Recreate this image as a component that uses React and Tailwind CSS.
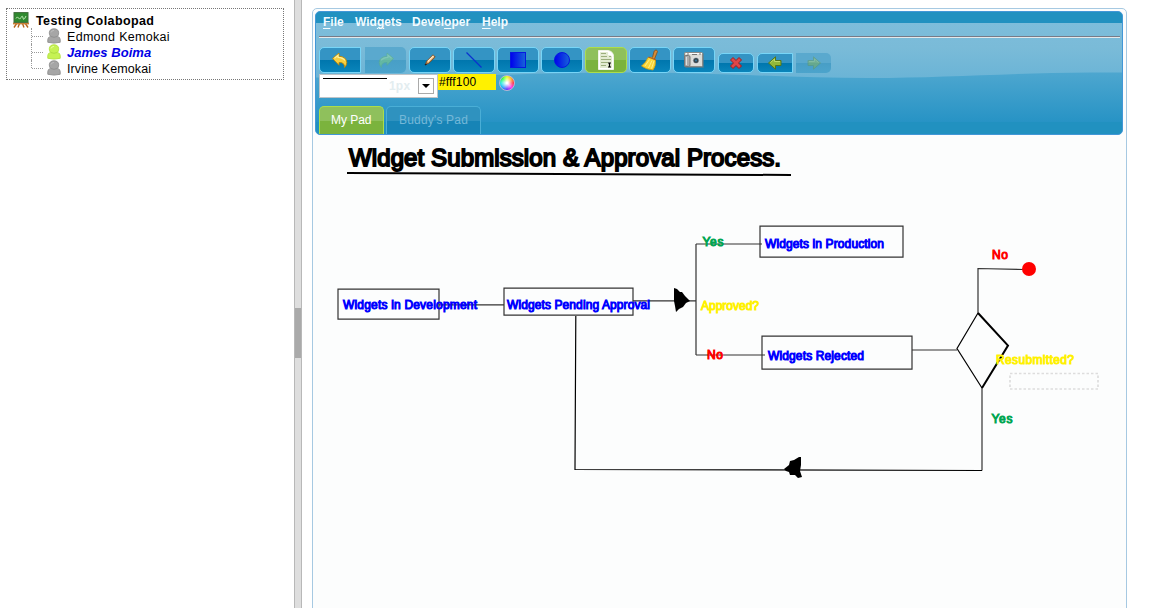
import React from "react";

const Person = ({ active }) => (
  <svg width="14" height="16" viewBox="0 0 14 16" className="shrink-0">
    <path
      d="M.8 14.300V11.500Q.8 9.200 3.500 8.400 2.300 7 2.300 4.800 2.600.800 7 .800t4.700 4Q11.700 7 10.500 8.400q2.700.8 2.700 3.100v2.800q-6.200 1.600-12.400 0z"
      fill={active ? "#c6f254" : "#a6a6a6"}
      stroke={active ? "#b2e040" : "#8e8e8e"}
      strokeWidth=".9"
    />
    <path d="M3.800 8.500q3.200 1.600 6.400 0" fill="none" stroke={active ? "#a5d63a" : "#8a8a8a"} strokeWidth=".8" />
    <path d="M4 4.500Q4.500 2.600 7 2.300" fill="none" stroke={active ? "#e4ff9c" : "#bdbdbd"} />
  </svg>
);

const Board = () => (
  <svg width="18" height="16" viewBox="0 0 18 16" className="shrink-0">
    <path d="M5 11 2 15.500M13 11l3 4.500M7.500 11.500l-1.500 4M10.500 11.500l1.500 4" stroke="#b5651d" strokeWidth="1.400" />
    <path d="M1 11.500h16" stroke="#c87f35" strokeWidth="1.800" />
    <rect x="2" y=".6" width="14" height="9.800" fill="#2f8a2f" stroke="#3f6b3a" />
    <path d="M4 6.500q1.500-3 2.500-.5T9 5.500t2 .500T14 4" fill="none" stroke="#bfe8b5" />
  </svg>
);

const Curve = ({ flip, a, b, c }) => (
  <svg width="18" height="18" viewBox="0 0 18 18" className={flip ? "-scale-x-100" : ""}>
    <path d="M1.500 7.500 8 2v3.200q7.500.6 7.800 6.300 0 2.800-2.300 5 .3-5.300-5.500-5v2.800z" fill={a} stroke={b} strokeWidth=".9" strokeLinejoin="round" />
    <path d="M3.500 7.300 7 4.300v2q5 .3 7 3.200" fill="none" stroke={c} strokeWidth="1.200" />
  </svg>
);

const Pencil = () => (
  <svg width="14" height="14" viewBox="0 0 14 14">
    <path d="m2.500 11.500 1.200-3.300L10 1.800 12.200 4 5.800 10.300z" fill="#e0a868" stroke="#7a4a20" strokeWidth=".9" />
    <path d="m4.800 8.500 5.700-5.700" stroke="#fff0d0" strokeWidth="1.200" />
    <path d="m2 12 1.500-1" stroke="#222" strokeWidth="1.500" />
  </svg>
);

const LineIcon = () => (
  <svg width="18" height="18" viewBox="0 0 18 18">
    <path d="m1.500 1.500 15 15" stroke="#0a32cf" strokeWidth="1.300" />
  </svg>
);

const Square = () => (
  <svg width="18" height="18" viewBox="0 0 18 18">
    <defs>
      <linearGradient id="sq"><stop stopColor="#0000ee" /><stop offset="1" stopColor="#1665d8" /></linearGradient>
    </defs>
    <rect x="1.500" y="1.500" width="15" height="15" fill="url(#sq)" stroke="#0618e0" />
  </svg>
);

const Circle = () => (
  <svg width="18" height="18" viewBox="0 0 18 18">
    <circle cx="9" cy="9" r="7.500" fill="url(#sq)" stroke="#0618e0" />
  </svg>
);

const Page = () => (
  <svg width="20" height="22" viewBox="0 0 20 22">
    <path d="M2.500 1.500H12q5.500 1 5.500 6v13h-15z" fill="#fff" stroke="#eef3e6" />
    <path d="M4 3h8q4 1.500 4 5v11H4z" fill="#e3ebd2" />
    <path d="M5 4.500h5M5 7.500h6M13 7.500h2M5 10.500h10M5 13.500h7M5 16.500h5" stroke="#94a874" strokeWidth=".9" />
    <path d="M11 2q5 1 6 6-2-2-5-2 1-2-1-4z" fill="#fff" />
    <path d="M12 14h3M13.500 14v4M12 18h3" stroke="#000" strokeWidth="1.200" />
  </svg>
);

const Broom = () => (
  <svg width="20" height="22" viewBox="0 0 20 22">
    <path d="m12.200 9.500 2-7.500q2.500-2.500 3.300.500L14.500 10z" fill="#d78b35" stroke="#81501c" strokeWidth=".8" />
    <path d="M8 8.500q4-1 7.500 2.500.5 6-2.500 10Q6 20.500 1.500 17 6 13.500 8 8.500z" fill="#f8d636" stroke="#c99a15" strokeWidth=".8" />
    <path d="M9.500 10.500 5 17M12 11.500 8.500 19M14 12l-2.500 7.500" stroke="#fff29a" strokeWidth=".8" />
    <path d="m8.500 8 7.500 3" stroke="#b45c20" strokeWidth="1.300" />
  </svg>
);

const Camera = () => (
  <svg width="22" height="18" viewBox="0 0 22 18">
    <rect x="2" y="2" width="19" height="15" rx="1" fill="#687982" opacity=".6" />
    <rect x="1.500" y="1.500" width="18" height="14" rx="1" fill="#dcdcd7" stroke="#8b8b87" />
    <rect x="1.500" y="4.500" width="5.500" height="11" rx="1.500" fill="#aaa" stroke="#777" />
    <path d="M3.500 6v8" stroke="#ddd" />
    <path d="M3 2.500h16" stroke="#fff" />
    <path d="M4 3h2M9 3.500h5M16 3h2" stroke="#777" />
    <circle cx="13" cy="9.500" r="3.800" fill="#b7bdc1" stroke="#e6e6e6" />
    <circle cx="13" cy="9.500" r="2.500" fill="#37464d" />
    <circle cx="13" cy="9.500" r="1" fill="#3c79a0" />
  </svg>
);

const Cross = () => (
  <svg width="14" height="14" viewBox="0 0 14 14">
    <path d="m1.500 4 2.500-2.500 3 3 3-3L12.500 4l-3 3 3 3-2.500 2.500-3-3-3 3L1.500 10l3-3z" fill="#df4646" stroke="#a51d1d" strokeLinejoin="round" />
  </svg>
);

const Arrow = ({ flip }) => (
  <svg width="16" height="14" viewBox="0 0 16 14" className={flip ? "-scale-x-100" : ""}>
    <path d="M1.500 7 8.500.8v3.700h5.500v5H8.500v3.700z" fill="#92b83a" stroke={flip ? "#66964a" : "#54761b"} strokeLinejoin="round" />
    <path d="M3.500 6.500 7.500 3v2.500h5.500" fill="none" stroke="#bcd968" />
  </svg>
);

const blue = "bg-linear-to-b from-[#3494c4] from-50% to-[#0a85bb] via-[#0076ad] via-50% border-[#77d5f7]";
const tall = "w-[42px] h-[26px] border";
const small = "w-[36px] h-5 border";

const Tool = ({ className, children }) => (
  <button className={`flex items-center justify-center shrink-0 ${className}`}>{children}</button>
);

const MenuItem = ({ before = "", hot, after, className }) => (
  <span className={`block whitespace-nowrap ${className}`}>
    {before}
    <span className="underline underline-offset-2">{hot}</span>
    {after}
  </span>
);

const Header = () => (
  <header className="relative isolate h-[124px] w-[808px] overflow-hidden rounded-[5px] border border-[#4297d7] bg-[#2191c0]">
    <svg width="808" height="124" viewBox="0 0 808 124" className="absolute -left-px -top-px -z-10">
      <defs>
        <linearGradient id="base" x1="0" x2="0" y1="0" y2="1">
          <stop stopColor="#50a8d0" /><stop offset="1" stopColor="#2793c5" />
        </linearGradient>
        <linearGradient id="gloss" x1="0" x2="0" y1="0" y2="1">
          <stop stopColor="#7dbddb" /><stop offset=".45" stopColor="#7abbd8" /><stop offset="1" stopColor="#6bb4d6" />
        </linearGradient>
      </defs>
      <rect y="58" width="808" height="53" fill="url(#base)" />
      <path d="M0 12H808V61.500Q790 61.500 775 61.600C690 62 630 67 554 67S400 61.500 304 61.500 140 67 54 67Q25 67 0 66.500z" fill="url(#gloss)" />
    </svg>
    <nav className="ml-[3px] mr-[2px] flex h-[25px] border-b border-[#777b88] pl-[4px] pt-[3px] font-['Liberation_Sans'] text-[12px] font-bold leading-[14px] text-[#f2fbff]">
      <MenuItem hot="F" after="ile" className="w-[32px]" />
      <MenuItem before="Wid" hot="g" after="ets" className="w-[57px]" />
      <MenuItem before="Devel" hot="o" after="per" className="w-[70px]" />
      <MenuItem hot="H" after="elp" className="w-[40px]" />
    </nav>
    <div className="ml-[3px] mr-[2px] h-px bg-[#e5e9eb]" />
    <div className="ml-[3px] mt-[9px] flex h-[26px] items-end">
      <Tool className={`${tall} ${blue} rounded-l-[5px]`}><Curve a="#f7cf3f" b="#b8870c" c="#fff09c" /></Tool>
      <Tool className="ml-1 h-[26px] w-[41px] rounded-r-[5px] bg-linear-to-b from-[#5aa9ce] from-50% via-[#489ec6] via-50% to-[#4ca4cc]">
        <span className="opacity-50"><Curve flip a="#7fd07f" b="#5fb47a" c="#a6e2a6" /></span>
      </Tool>
      <Tool className={`${tall} ${blue} ml-[3px] rounded-[5px]`}><Pencil /></Tool>
      <Tool className={`${tall} ${blue} ml-[2px] rounded-[5px]`}><LineIcon /></Tool>
      <Tool className={`${tall} ${blue} ml-[2px] rounded-[5px]`}><Square /></Tool>
      <Tool className={`${tall} ${blue} ml-[2px] rounded-[5px]`}><Circle /></Tool>
      <Tool className={`${tall} ml-[2px] rounded-[5px] border-[#acdd4a] bg-linear-to-b from-[#8fc05c] from-50% via-[#7bb33d] via-50% to-[#7bb33d]`}><Page /></Tool>
      <Tool className={`${tall} ${blue} ml-[2px] rounded-[5px]`}><Broom /></Tool>
      <Tool className={`${tall} ${blue} ml-[2px] rounded-[5px]`}><Camera /></Tool>
      <Tool className={`${small} ${blue} ml-[3px] rounded-[5px]`}><Cross /></Tool>
      <Tool className={`${small} ${blue} ml-[3px] rounded-l-[5px]`}><Arrow /></Tool>
      <Tool className="ml-[3px] h-5 w-[35px] rounded-r-[5px] bg-linear-to-b from-[#5aa9ce] from-50% via-[#489ec6] via-50% to-[#4ca4cc]"><span className="opacity-40"><Arrow flip /></span></Tool>
    </div>
    <div className="ml-[3px] mt-px flex h-6 items-start font-['Liberation_Sans'] text-[12px]">
      <div className="flex h-6 w-[119px] border border-[#bfc4c8] bg-white pl-[3px]">
        <span className="mt-[3px] h-px w-16 bg-black" />
        <span className="ml-[2px] mt-[4px] w-[29px] font-bold leading-[14px] tracking-[.2px] text-[#e3edf0]">1px</span>
        <span className="mt-[3px] flex h-4 w-4 items-center justify-center border border-[#aaa] bg-white">
          <svg width="8" height="4" viewBox="0 0 8 4"><path d="M0 0h8L4 4z" /></svg>
        </span>
      </div>
      <div className="h-4 w-[58px] bg-[#fff100] pl-[1px] leading-4 tracking-[.15px] text-black">#fff100</div>
      <div className="ml-[3px] mt-px h-4 w-4 rounded-full border border-[#b9b4d4] bg-[radial-gradient(circle,#fff_8%,transparent_65%),conic-gradient(from_90deg,#f34,#f3e,#63f,#2af,#2ed,#3f4,#ef2,#fa2,#f34)]" />
    </div>
    <div className="ml-[3px] mt-[8px] flex gap-[2px] font-['Liberation_Sans'] text-[12px] leading-[14px]">
      <div className="h-[29px] w-[65px] rounded-t-[5px] border border-b-0 border-[#acdd4a] bg-linear-to-b from-[#8fc05c] from-50% via-[#7bb33d] via-50% to-[#7bb33d] pl-[11px] pt-[6px] tracking-[-.05px] text-white">My Pad</div>
      <div className="h-[29px] w-[95px] rounded-t-[5px] border border-b-0 border-[#4aaed6] bg-linear-to-b from-[#2f92bf] from-50% via-[#1784b6] via-50% to-[#1784b6] pl-[12px] pt-[6px] tracking-[.18px] text-[#75b8d8]">Buddy's Pad</div>
    </div>
  </header>
);

const Label = ({ x, y, w, color, children }) => (
  <text x={x} y={y} textLength={w} fill={color} stroke={color} strokeWidth="1" fontSize="12">{children}</text>
);

const Diagram = () => (
  <svg width="813" height="473" viewBox="313 135 813 473" className="block font-['Liberation_Sans']">
    <text x="349" y="166" textLength="432" fontSize="24" stroke="#000" strokeWidth="1.800">Widget Submission &amp; Approval Process.</text>
    <path d="M347 173 791 175" stroke="#000" strokeWidth="2" />
    <g fill="none" stroke="#333" strokeWidth="1.200">
      <path d="M338 289.200h101v30H338zM504 288.200h129v27H504zM760 226.200h143v31H760zM762 336.200h150v33H762z" />
      <path d="M439 304.800h65M633 300.800h63M696 244v111M696 244h66M696 355h69M912 350h45M978 313v-44.500L1024 269.500M982 388v82.500" />
      <path d="M575.800 316 575 469.500 982 470.500" stroke="#000" />
      <path d="M978 313 957 348.500 982 388" stroke="#000" />
      <path d="M978 313 1008 345.500 982 388" stroke="#000" strokeWidth="2" />
    </g>
    <path d="m674 288 3 1 3 3 2 0 3 4 4 4 1 1-4 2-3 4-4 2-3 3-1-6-1-5z" />
    <path d="m784 469 5-4 1-4 4-1 5-3 2 0v8l-1 6 2 6-4 1-3-3-5 0-1-3-3-1z" />
    <circle cx="1029" cy="269" r="7" fill="#f00" />
    <rect x="1010" y="373.500" width="88" height="15.500" fill="none" stroke="#ddd" strokeWidth="1.700" strokeDasharray="2.500 2" />
    <Label x="343" y="309" w="134" color="#00f">Widgets in Development</Label>
    <Label x="507" y="309" w="143" color="#00f">Widgets Pending Approval</Label>
    <Label x="765" y="248" w="119" color="#00f">Widgets in Production</Label>
    <Label x="768" y="360" w="96" color="#00f">Widgets Rejected</Label>
    <Label x="702.500" y="246" w="21" color="#00a651">Yes</Label>
    <Label x="707" y="359" w="16" color="#f00">No</Label>
    <Label x="701" y="310" w="58" color="#fff100">Approved?</Label>
    <Label x="992" y="259" w="16" color="#f00">No</Label>
    <Label x="996" y="364" w="78" color="#fff100">Resubmitted?</Label>
    <Label x="991.500" y="423" w="21" color="#00a651">Yes</Label>
  </svg>
);

const Buddy = ({ name, active, last }) => (
  <li className="flex h-4 items-center">
    <span className={`ml-[24px] w-px self-start border-l border-dotted border-[#999] ${last ? "h-2" : "h-4"}`} />
    <span className="mr-[4px] w-[11px] border-t border-dotted border-[#999]" />
    <Person active={active} />
    <span className={`ml-[6px] mt-[2px] leading-4 ${active ? "text-[13px] font-bold italic tracking-[.03px] text-[#0000e6]" : last ? "text-[12.500px] tracking-[.1px]" : "text-[12.500px] tracking-[.3px]"}`}>{name}</span>
  </li>
);

export default function App() {
  return (
    <div className="flex h-[608px] w-[1150px] overflow-hidden bg-white">
      <aside className="w-[294px] shrink-0 pl-[6px] pt-2 font-['Liberation_Sans'] text-black">
        <div className="h-[72px] w-[278px] border border-dotted border-[#777] pt-[3px]">
          <div className="flex h-4 items-center pl-[5px]">
            <Board />
            <span className="ml-[6px] mt-[2px] text-[12.500px] font-bold leading-4 tracking-[.4px]">Testing Colabopad</span>
          </div>
          <ul>
            <Buddy name="Edmond Kemokai" />
            <Buddy name="James Boima" active />
            <Buddy name="Irvine Kemokai" last />
          </ul>
        </div>
      </aside>
      <div className="flex w-2 shrink-0 flex-col justify-start border-x border-[#b8b8b8] bg-[#dedede] pt-[308px]">
        <div className="h-[50px] bg-[#aaa]" />
      </div>
      <main className="ml-[10px] mt-2 h-[620px] w-[815px] shrink-0 rounded-t-[5px] border border-[#a6c9e2] bg-[#fcfdfd]">
        <div className="h-[126px] pl-[2px] pt-[2px]"><Header /></div>
        <Diagram />
      </main>
    </div>
  );
}
